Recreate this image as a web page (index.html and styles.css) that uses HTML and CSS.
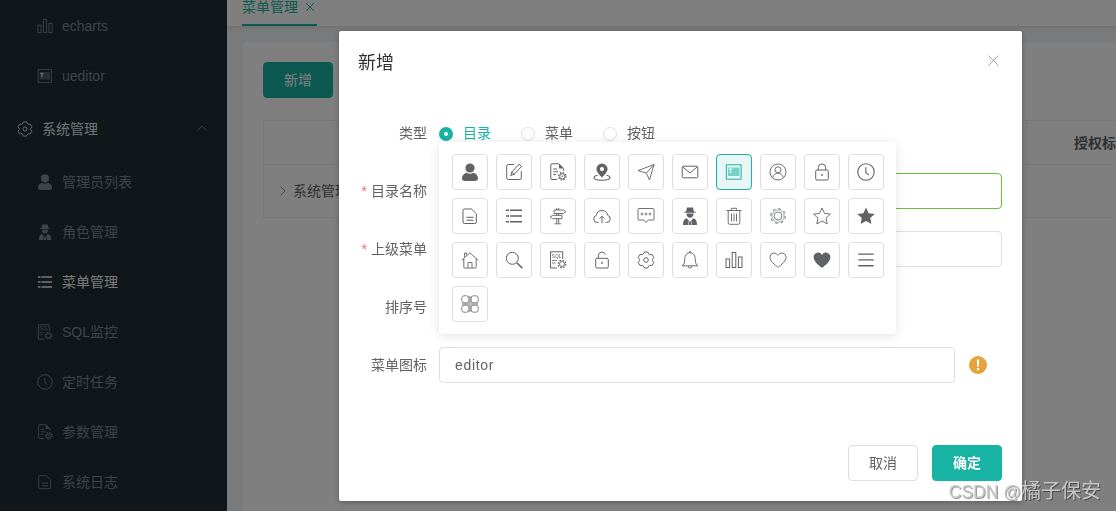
FILE: index.html
```html
<!DOCTYPE html>
<html lang="zh">
<head>
    <meta charset="UTF-8">
    <title>菜单管理</title>
    <link rel="stylesheet" href="styles.css">
</head>
<body>
    <!-- Iconos -->
    <svg class="icon-defs" xmlns="http://www.w3.org/2000/svg">
        <symbol id="i-user" viewBox="0 0 18 18"><circle cx="9" cy="5" r="4.600" fill="currentColor"/><path fill="currentColor" d="M1 15.500C1 12.500 3 10.600 5.600 9.800c2 1.300 4.800 1.300 6.800 0 2.600.8 4.600 2.700 4.600 5.700 0 1.500-1.300 2.500-3 2.500H4c-1.700 0-3-1-3-2.500z"/></symbol>
        <symbol id="i-edit" viewBox="0 0 18 18"><g fill="none" stroke="currentColor" stroke-width="1"><path d="M9 1.500H3.500A1.800 1.800 0 0 0 1.700 3.300v11.400a1.800 1.800 0 0 0 1.800 1.800h11a1.800 1.800 0 0 0 1.800-1.800V8"/><path stroke-linejoin="round" d="M5.800 12.600l1-3.600L14 1.200l2.500 2.300-7.200 7.700z"/><path d="M6.800 9l2.500 2.200"/></g></symbol>
        <symbol id="i-docset" viewBox="0 0 18 18"><path fill="currentColor" d="M10 .8l4.600 4.700H10z"/><g fill="none" stroke="currentColor" stroke-width="1"><path d="M8 16.500H3a1.200 1.200 0 0 1-1.200-1.200V2A1.200 1.200 0 0 1 3 .8h7l4.600 4.700v2.200"/><path d="M4.200 6h4M4.200 8.800h5M4.200 11.600h3"/><circle cx="13.300" cy="13.300" r="2.600"/><circle cx="13.300" cy="13.300" r="3.700" stroke-width="1.200" stroke-dasharray="1.600 1.300"/></g><circle cx="13.300" cy="13.300" r=".8" fill="currentColor"/></symbol>
        <symbol id="i-pin" viewBox="0 0 18 18"><path fill="currentColor" fill-rule="evenodd" d="M9 .5a5.600 5.600 0 0 0-5.600 5.600C3.400 9.800 9 14.500 9 14.500s5.600-4.700 5.600-8.400A5.600 5.600 0 0 0 9 .5zM9 4a2.100 2.100 0 1 1 0 4.200A2.100 2.100 0 0 1 9 4z"/><path fill="none" stroke="currentColor" stroke-width="1.100" d="M4.500 12.300C2.200 12.800 1 13.700 1 14.700c0 1.500 3.600 2.500 8 2.500s8-1 8-2.500c0-1-1.200-1.900-3.500-2.400"/></symbol>
        <symbol id="i-send" viewBox="0 0 18 18"><path fill="none" stroke="currentColor" stroke-width=".9" stroke-linejoin="round" d="M1 7.600L17 1.500 12.500 17 9.300 10.100zM9.300 10.100L17 1.500"/></symbol>
        <symbol id="i-mail" viewBox="0 0 18 18"><g fill="none" stroke="currentColor" stroke-width="1"><rect x="1.200" y="3.200" width="15.600" height="11.600" rx="1.200"/><path d="M1.600 3.800L9 10l7.400-6.200"/></g></symbol>
        <symbol id="i-editor" viewBox="0 0 18 18"><rect x="1.300" y="1.800" width="14.800" height="14.400" fill="none" stroke="currentColor" stroke-width="1"/><rect x="3" y="4.500" width="11.500" height="8.500" fill="currentColor" opacity=".55"/><path stroke="#fff" stroke-width="1.100" d="M3.800 6h3.400M5.500 6v4"/></symbol>
        <symbol id="i-usercircle" viewBox="0 0 18 18"><g fill="none" stroke="currentColor" stroke-width=".9"><circle cx="9" cy="9" r="8"/><circle cx="9" cy="6.800" r="3"/><path d="M3.800 14.500c.6-2.700 2.600-4.400 5.200-4.400s4.600 1.700 5.200 4.400"/></g></symbol>
        <symbol id="i-lock" viewBox="0 0 18 18"><g fill="none" stroke="currentColor" stroke-width="1"><rect x="2.700" y="7" width="12.600" height="10" rx="1.300"/><path d="M5.300 7V4.600a3.700 3.700 0 0 1 7.400 0V7"/></g><rect x="8.400" y="10.800" width="1.200" height="2.200" fill="currentColor"/></symbol>
        <symbol id="i-clock" viewBox="0 0 18 18"><g fill="none" stroke="currentColor" stroke-width="1.100"><circle cx="9" cy="9" r="8.200"/><path d="M8.800 4.300v5l3 2.800"/></g></symbol>
        <symbol id="i-doc" viewBox="0 0 18 18"><g fill="none" stroke="currentColor" stroke-width="1"><path stroke-linejoin="round" d="M3.500 2h7l4.800 4.700v8.300a1.500 1.500 0 0 1-1.500 1.500H3.500A1.500 1.500 0 0 1 2 15V3.500A1.500 1.500 0 0 1 3.500 2z"/><path d="M5.500 10.300h7M5.500 13.200h7"/></g></symbol>
        <symbol id="i-list" viewBox="0 0 18 18"><path fill="currentColor" d="M1 2.500h3v1.600H1zM5 2.500h12v1.600H5zM1 8.200h3v1.600H1zM5 8.200h12v1.600H5zM1 13.900h3v1.600H1zM5 13.900h12v1.600H5z"/></symbol>
        <symbol id="i-sign" viewBox="0 0 18 18"><g fill="none" stroke="currentColor" stroke-width=".9"><path d="M7.700 1v2M9.700 1v2M7.700 6.500v2M9.700 6.500v2M7.700 11.500v5M9.700 11.500v5M5.500 16.800h6.400"/><path stroke-linejoin="round" d="M5 3h9.500l2.300 1.700-2.300 1.800H5zM13 8.300H3.500L1.200 10l2.300 1.700H13z"/></g></symbol>
        <symbol id="i-cloud" viewBox="0 0 18 18"><g fill="none" stroke="currentColor" stroke-width="1"><path stroke-linejoin="round" d="M5.500 15.500H4.300A3.700 3.700 0 0 1 3.300 8.300 5.800 5.800 0 0 1 14.700 8.300a3.700 3.700 0 0 1-1 7.200h-1.200"/><path d="M9 16V9.500M6.700 11.500L9 9.200l2.300 2.300"/></g></symbol>
        <symbol id="i-msg" viewBox="0 0 18 18"><path fill="none" stroke="currentColor" stroke-width=".9" stroke-linejoin="round" d="M2 1.500h14a1 1 0 0 1 1 1v9.500a1 1 0 0 1-1 1h-4.800L9 15.500 6.800 13H2a1 1 0 0 1-1-1V2.500a1 1 0 0 1 1-1z"/><g fill="none" stroke="currentColor" stroke-width=".8"><circle cx="5" cy="7" r="1"/><circle cx="9" cy="7" r="1"/><circle cx="13" cy="7" r="1"/></g></symbol>
        <symbol id="i-spy" viewBox="0 0 18 18"><path fill="currentColor" d="M6 .5h6l1 4.200h1.800v1H3.200v-1H5zM5.400 6.500h7.200c0 2.500-1.400 4.300-3.600 4.300S5.400 9 5.400 6.500zM2 18c0-3.800 1-6 3.600-6.700l2.200 2.200L7.200 18zM16 18c0-3.800-1-6-3.600-6.700l-2.200 2.200.6 4.500zM8.300 14.200h1.400l.5 3.800H7.800z"/></symbol>
        <symbol id="i-trash" viewBox="0 0 18 18"><g fill="none" stroke="currentColor" stroke-width=".9"><path d="M1.500 3.500h15M6.300 3.500V1.300h5.400v2.200M3.200 3.500v12.300A1.500 1.500 0 0 0 4.700 17.300h8.600a1.500 1.500 0 0 0 1.500-1.500V3.500M6.500 6.500v8M9 6.500v8M11.500 6.500v8"/></g></symbol>
        <symbol id="i-sun" viewBox="0 0 18 18"><g fill="none" stroke="currentColor"><circle cx="9" cy="9" r="4" stroke-width=".8"/><circle cx="9" cy="9" r="6.200" stroke-width=".7" opacity=".8"/><circle cx="9" cy="9" r="7.400" stroke-width="1.200" stroke-dasharray="3 2.810" opacity=".65"/></g></symbol>
        <symbol id="i-star" viewBox="0 0 18 18"><path fill="none" stroke="currentColor" stroke-width=".9" stroke-linejoin="round" d="M9 1l2.500 5.400 5.900.7-4.400 4 1.200 5.800L9 14l-5.200 2.900L5 11.100l-4.400-4 5.900-.7z"/></symbol>
        <symbol id="i-starfill" viewBox="0 0 18 18"><path fill="currentColor" d="M9 .6l2.600 5.600 6.100.7-4.500 4.200 1.200 6L9 14.100l-5.400 3 1.200-6L.3 6.900l6.100-.7z"/></symbol>
        <symbol id="i-home" viewBox="0 0 18 18"><g fill="none" stroke="currentColor" stroke-width=".9"><path stroke-linejoin="round" d="M.8 9.300L9 1.800l8.200 7.500M2.800 7.800v8.200a1 1 0 0 0 1 1h10.400a1 1 0 0 0 1-1V7.800M7 17v-5.500h4V17M3.500 6.200V2h2v2.300"/></g></symbol>
        <symbol id="i-search" viewBox="0 0 18 18"><circle cx="7.300" cy="7.300" r="6" fill="none" stroke="currentColor" stroke-width="1"/><path stroke="currentColor" stroke-width="1.600" d="M11.800 11.800l5.500 5.500"/></symbol>
        <symbol id="i-sql" viewBox="0 0 18 18"><path fill="none" stroke="currentColor" stroke-width="1" d="M8 17H1.500V.8h12.200v7"/><text x="2.600" y="6.800" font-family="Liberation Sans, sans-serif" font-size="5" fill="currentColor">SQL</text><path stroke="currentColor" d="M3 9.500h5M3 12h3.500" stroke-width=".8"/><g fill="none" stroke="currentColor"><circle cx="13" cy="13" r="2.500" stroke-width=".9"/><circle cx="13" cy="13" r="3.800" stroke-width="1.200" stroke-dasharray="1.600 1.380"/></g></symbol>
        <symbol id="i-unlock" viewBox="0 0 18 18"><g fill="none" stroke="currentColor" stroke-width="1"><rect x="2.700" y="7.300" width="12.600" height="9.700" rx="1.300"/><path d="M5.300 7.300V4.600a3.700 3.700 0 0 1 7.200-1"/></g><rect x="8.400" y="10.800" width="1.200" height="2.200" fill="currentColor"/></symbol>
        <symbol id="i-gear" viewBox="0 0 18 18"><path fill="none" stroke="currentColor" stroke-width="1" stroke-linejoin="round" d="M6.200 3.250L7.300 .98h3.400l1.100 2.270.78.440 2.510-.18 1.710 2.960-1.420 2.080v.9l1.420 2.080-1.710 2.960-2.510-.18-.78.440-1.100 2.270H7.300l-1.100-2.270-.78-.44-2.510.18-1.710-2.960 1.420-2.080v-.9L1.200 6.470l1.710-2.960 2.510.18z"/><circle cx="9" cy="9" r="2.300" fill="none" stroke="currentColor" stroke-width="1"/></symbol>
        <symbol id="i-bell" viewBox="0 0 18 18"><g fill="none" stroke="currentColor" stroke-width=".9"><path stroke-linejoin="round" d="M1 14.800c1.600-1 2.400-2.400 2.600-4.800l.3-3.200a5.100 5.100 0 0 1 10.200 0l.3 3.200c.2 2.400 1 3.800 2.600 4.800z"/><path d="M7 15a2 2 0 0 0 4 0"/><circle cx="9" cy="1" r=".7"/></g></symbol>
        <symbol id="i-bars" viewBox="0 0 18 18"><g fill="none" stroke="currentColor" stroke-width="1"><rect x="1" y="8" width="3.600" height="8.500"/><rect x="7.200" y="1.500" width="3.600" height="15"/><rect x="13.400" y="6" width="3.600" height="10.500"/></g></symbol>
        <symbol id="i-heart" viewBox="0 0 18 18"><path fill="none" stroke="currentColor" stroke-width=".9" stroke-linejoin="round" d="M9 16.200S.9 11 .9 6.300A4.300 4.300 0 0 1 9 4.300a4.300 4.300 0 0 1 8.100 2c0 4.700-8.100 9.900-8.100 9.900z"/></symbol>
        <symbol id="i-heartfill" viewBox="0 0 18 18"><path fill="currentColor" d="M9 16.800S.6 11.400.6 6.200A4.500 4.500 0 0 1 9 3.900a4.500 4.500 0 0 1 8.400 2.300c0 5.200-8.400 10.600-8.400 10.600z"/></symbol>
        <symbol id="i-menu" viewBox="0 0 18 18"><path fill="currentColor" d="M1.300 2.500h15.400v1.300H1.300zM1.300 8.300h15.400v1.300H1.300zM1.300 14.100h15.400v1.300H1.300z"/></symbol>
        <symbol id="i-grid" viewBox="0 0 18 18"><path stroke="#b4b4b8" stroke-width="2.600" d="M9 1v16M1 9h16"/><g fill="#fff" stroke="#77797e" stroke-width=".9"><rect x=".8" y=".8" width="7" height="7" rx="2.200"/><rect x="10.200" y=".8" width="7" height="7" rx="2.200"/><rect x=".8" y="10.200" width="7" height="7" rx="2.200"/><rect x="10.200" y="10.200" width="7" height="7" rx="2.200"/></g></symbol>
    </svg>

    <div class="layout">
        <!-- Menu lateral -->
        <aside class="sidebar">
            <div class="side-item"><svg class="side-icon"><use href="#i-bars"/></svg><span>echarts</span></div>
            <div class="side-item"><svg class="side-icon"><use href="#i-editor"/></svg><span>ueditor</span></div>
            <div class="side-group">
                <svg class="group-icon"><use href="#i-gear"/></svg>
                <span class="group-name">系统管理</span>
                <svg class="group-arrow" viewBox="0 0 10 6"><path d="M.5 5.500L5 1l4.500 4.500"/></svg>
            </div>
            <div class="side-item"><svg class="side-icon"><use href="#i-user"/></svg><span>管理员列表</span></div>
            <div class="side-item"><svg class="side-icon"><use href="#i-spy"/></svg><span>角色管理</span></div>
            <div class="side-item active"><svg class="side-icon"><use href="#i-list"/></svg><span>菜单管理</span></div>
            <div class="side-item"><svg class="side-icon"><use href="#i-sql"/></svg><span>SQL监控</span></div>
            <div class="side-item"><svg class="side-icon"><use href="#i-clock"/></svg><span>定时任务</span></div>
            <div class="side-item"><svg class="side-icon"><use href="#i-docset"/></svg><span>参数管理</span></div>
            <div class="side-item"><svg class="side-icon"><use href="#i-doc"/></svg><span>系统日志</span></div>
        </aside>

        <main class="main">
            <div class="tabs">
                <div class="tab">
                    <span>菜单管理</span>
                    <svg class="tab-close" viewBox="0 0 8 8"><path d="M0 0l8 8M8 0L0 8"/></svg>
                </div>
            </div>
            <div class="content">
                <div class="panel">
                    <button class="btn btn-primary" type="button">新增</button>
                    <div class="table">
                        <div class="table-row table-head">
                            <div class="cell-main"></div>
                            <div class="cell-side">授权标</div>
                        </div>
                        <div class="table-row table-body">
                            <div class="cell-main">
                                <svg class="expand" viewBox="0 0 6 10"><path d="M.5.500L5 5 .5 9.500"/></svg>
                                <span>系统管理</span>
                            </div>
                            <div class="cell-side"></div>
                        </div>
                    </div>
                </div>
            </div>
        </main>
    </div>

    <div class="mask"></div>

    <!-- Dialogo -->
    <div class="dialog">
        <div class="dialog-header">
            <span class="dialog-title">新增</span>
            <svg class="dialog-close" viewBox="0 0 11 11"><path d="M.5.500l10 10M10.500.500l-10 10"/></svg>
        </div>
        <form class="dialog-form">
            <div class="form-row">
                <label class="form-label">类型</label>
                <div class="radios">
                    <span class="radio checked"><i></i>目录</span>
                    <span class="radio"><i></i>菜单</span>
                    <span class="radio"><i></i>按钮</span>
                </div>
            </div>
            <div class="form-row">
                <label class="form-label"><em>*</em>目录名称</label>
                <input class="input input-ok" type="text">
            </div>
            <div class="form-row">
                <label class="form-label"><em>*</em>上级菜单</label>
                <input class="input" type="text">
            </div>
            <div class="form-row">
                <label class="form-label">排序号</label>
                <input class="input input-short" type="text">
            </div>
            <div class="form-row icon-row">
                <label class="form-label">菜单图标</label>
                <input class="input input-icon" type="text" value="editor">
                <svg class="warn" viewBox="0 0 18 18"><circle cx="9" cy="9" r="9"/><path d="M7.800 3.500h2.400l-.4 7.200H8.200zM7.900 12h2.200v2.200H7.900z"/></svg>

                <div class="icon-popover">
                    <span class="icon-cell"><svg><use href="#i-user"/></svg></span>
                    <span class="icon-cell"><svg><use href="#i-edit"/></svg></span>
                    <span class="icon-cell"><svg><use href="#i-docset"/></svg></span>
                    <span class="icon-cell"><svg><use href="#i-pin"/></svg></span>
                    <span class="icon-cell"><svg><use href="#i-send"/></svg></span>
                    <span class="icon-cell"><svg><use href="#i-mail"/></svg></span>
                    <span class="icon-cell selected"><svg><use href="#i-editor"/></svg></span>
                    <span class="icon-cell"><svg><use href="#i-usercircle"/></svg></span>
                    <span class="icon-cell"><svg><use href="#i-lock"/></svg></span>
                    <span class="icon-cell"><svg><use href="#i-clock"/></svg></span>
                    <span class="icon-cell"><svg><use href="#i-doc"/></svg></span>
                    <span class="icon-cell"><svg><use href="#i-list"/></svg></span>
                    <span class="icon-cell"><svg><use href="#i-sign"/></svg></span>
                    <span class="icon-cell"><svg><use href="#i-cloud"/></svg></span>
                    <span class="icon-cell"><svg><use href="#i-msg"/></svg></span>
                    <span class="icon-cell"><svg><use href="#i-spy"/></svg></span>
                    <span class="icon-cell"><svg><use href="#i-trash"/></svg></span>
                    <span class="icon-cell"><svg><use href="#i-sun"/></svg></span>
                    <span class="icon-cell"><svg><use href="#i-star"/></svg></span>
                    <span class="icon-cell"><svg><use href="#i-starfill"/></svg></span>
                    <span class="icon-cell"><svg><use href="#i-home"/></svg></span>
                    <span class="icon-cell"><svg><use href="#i-search"/></svg></span>
                    <span class="icon-cell"><svg><use href="#i-sql"/></svg></span>
                    <span class="icon-cell"><svg><use href="#i-unlock"/></svg></span>
                    <span class="icon-cell"><svg><use href="#i-gear"/></svg></span>
                    <span class="icon-cell"><svg><use href="#i-bell"/></svg></span>
                    <span class="icon-cell"><svg><use href="#i-bars"/></svg></span>
                    <span class="icon-cell"><svg><use href="#i-heart"/></svg></span>
                    <span class="icon-cell"><svg><use href="#i-heartfill"/></svg></span>
                    <span class="icon-cell"><svg><use href="#i-menu"/></svg></span>
                    <span class="icon-cell"><svg><use href="#i-grid"/></svg></span>
                </div>
            </div>
        </form>
        <div class="dialog-footer">
            <button class="btn btn-plain" type="button">取消</button>
            <button class="btn btn-primary btn-strong" type="button">确定</button>
        </div>
    </div>

    <div class="watermark"><span class="watermark-latin">CSDN @</span>橘子保安</div>
</body>
</html>
```

FILE: styles.css
```css
/* Base */
html, body {
    height: 100%;
}

body {
    margin: 0;
    overflow: hidden;
    font-family: "Liberation Sans", "Noto Sans CJK SC", sans-serif;
    font-size: 14px;
    line-height: 20px;
    color: #606266;
    background: #f2f4f7;
}

.icon-defs {
    display: none;
}

.layout {
    display: flex;
    height: 100%;
}

/* Menu lateral */
.sidebar {
    flex: 0 0 227px;
    padding-top: 1px;
    overflow: hidden;
    box-sizing: border-box;
    background: #202c32;
    color: #7d8990;
}

.side-item {
    display: flex;
    align-items: center;
    gap: 9px;
    height: 50px;
    padding-left: 37px;
}

.side-item.active {
    color: #f4f4f4;
}

.side-icon {
    flex: none;
    width: 16px;
    height: 16px;
}

.side-group {
    display: flex;
    align-items: center;
    height: 56px;
    padding: 0 20px 0 17px;
    color: #e4e6e8;
}

.group-icon {
    flex: none;
    width: 16px;
    height: 16px;
    margin-right: 9px;
}

.group-name {
    flex: 1;
}

.group-arrow {
    width: 10px;
    height: 6px;
    margin-bottom: 3px;
    fill: none;
    stroke: #6f7a80;
}

/* Contenido */
.main {
    flex: 1;
    min-width: 0;
    display: flex;
    flex-direction: column;
}

.tabs {
    flex: 0 0 26px;
    display: flex;
    align-items: flex-end;
    padding-left: 15px;
    overflow: hidden;
    background: #fff;
    box-shadow: 0 1px 4px rgba(0, 0, 0, 0.12);
}

.tab {
    display: flex;
    align-items: center;
    gap: 8px;
    width: 75px;
    flex: none;
    padding-bottom: 10px;
    line-height: 14px;
    color: #17b3a3;
    border-bottom: 2px solid #17b3a3;
}

.tab-close {
    width: 8px;
    height: 8px;
    fill: none;
    stroke: #17b3a3;
}

.content {
    flex: 1;
    padding: 16px 0 0 16px;
    overflow: hidden;
}

.panel {
    height: 100%;
    width: 960px;
    padding: 20px;
    box-sizing: border-box;
    background: #fff;
    border-radius: 4px 0 0 0;
}

.table {
    width: 893px;
    margin-top: 22px;
    border: 1px solid #ebeef5;
    border-width: 1px 0 0 1px;
}

.table-row {
    display: flex;
    border-bottom: 1px solid #ebeef5;
}

.table-head {
    height: 43px;
    font-weight: bold;
    color: #606266;
}

.table-body {
    height: 52px;
}

.cell-main {
    flex: 0 0 763px;
    display: flex;
    align-items: center;
    gap: 7px;
    padding-left: 16px;
    box-sizing: border-box;
    border-right: 1px solid #ebeef5;
}

.cell-side {
    flex: 1;
    display: flex;
    align-items: center;
    padding-left: 47px;
    white-space: nowrap;
}

.expand {
    width: 6px;
    height: 10px;
    fill: none;
    stroke: #909399;
}

/* Botones */
.btn {
    width: 70px;
    height: 36px;
    padding: 0;
    font: inherit;
    border-radius: 4px;
    cursor: pointer;
}

.btn-primary {
    color: #fff;
    background: #17b3a3;
    border: 1px solid #17b3a3;
}

.btn-plain {
    color: #606266;
    background: #fff;
    border: 1px solid #dcdfe6;
}

.btn-strong {
    font-weight: bold;
}

/* Capa oscura */
.mask {
    position: fixed;
    top: 0;
    left: 0;
    width: 100%;
    height: 100%;
    background: rgba(0, 0, 0, 0.5);
}

/* Dialogo */
.dialog {
    position: fixed;
    top: 31px;
    left: 339px;
    width: 683px;
    height: 470px;
    display: flex;
    flex-direction: column;
    padding: 0 20px 20px;
    box-sizing: border-box;
    background: #fff;
    border-radius: 2px;
    box-shadow: 0 1px 5px rgba(0, 0, 0, 0.3);
}

.dialog-header {
    flex: 0 0 84px;
    display: flex;
    justify-content: space-between;
    align-items: flex-start;
}

.dialog-title {
    margin: 20px 0 0 -1px;
    font-size: 18px;
    line-height: 24px;
    color: #303133;
}

.dialog-close {
    width: 11px;
    height: 11px;
    margin: 24px 3px 0 0;
    fill: none;
    stroke: #a0a3aa;
}

.dialog-form {
    flex: 1;
    display: flex;
    flex-direction: column;
    gap: 22px;
}

.form-row {
    display: flex;
    align-items: center;
    gap: 12px;
    height: 36px;
}

.form-label {
    flex: 0 0 68px;
    text-align: right;
    white-space: nowrap;
}

.form-label em {
    margin-right: 4px;
    font-style: normal;
    color: #f56c6c;
}

.input {
    flex: 1;
    min-width: 0;
    height: 36px;
    padding: 0 15px;
    box-sizing: border-box;
    font: inherit;
    color: #606266;
    border: 1px solid #dcdfe6;
    border-radius: 4px;
    outline: none;
}

.input-ok {
    border-color: #67c23a;
}

.input-short {
    flex: 0 0 180px;
}

.input-icon {
    letter-spacing: 0.7px;
}

.radios {
    display: flex;
    gap: 30px;
}

.radio {
    display: flex;
    align-items: center;
    gap: 10px;
}

.radio i {
    width: 14px;
    height: 14px;
    box-sizing: border-box;
    margin-top: 1px;
    border: 1px solid #dcdfe6;
    border-radius: 50%;
    background: #fff;
}

.radio.checked {
    color: #17b3a3;
}

.radio.checked i {
    border: 5px solid #17b3a3;
}

/* Selector de iconos */
.icon-row {
    position: relative;
}

.warn {
    flex: none;
    width: 18px;
    height: 18px;
    margin: 0 15px 0 2px;
    fill: #e6a23c;
}

.warn path {
    fill: #fff;
}

.icon-popover {
    position: absolute;
    left: 80px;
    bottom: 49px;
    width: 457px;
    height: 192px;
    display: flex;
    flex-wrap: wrap;
    align-content: flex-start;
    gap: 8px;
    padding: 12px 12px 12px 13px;
    box-sizing: border-box;
    background: #fff;
    border-radius: 4px;
    box-shadow: 0 2px 12px rgba(0, 0, 0, 0.12);
}

.icon-cell {
    display: flex;
    align-items: center;
    justify-content: center;
    width: 36px;
    height: 36px;
    box-sizing: border-box;
    color: #606266;
    border: 1px solid #dcdfe6;
    border-radius: 4px;
}

.icon-cell svg {
    width: 18px;
    height: 18px;
}

.icon-cell.selected {
    color: #17b3a3;
    background: #e8f7f6;
    border-color: #17b3a3;
}

.dialog-footer {
    display: flex;
    justify-content: flex-end;
    gap: 14px;
}

/* Marca de agua */
.watermark {
    position: fixed;
    right: 15px;
    bottom: 6px;
    font-size: 20px;
    line-height: 26px;
    white-space: nowrap;
    color: #c6c6c6;
    text-shadow: 1px 1px 0 rgba(0, 0, 0, 0.4);
}

.watermark-latin {
    font-size: 17.5px;
}
```
